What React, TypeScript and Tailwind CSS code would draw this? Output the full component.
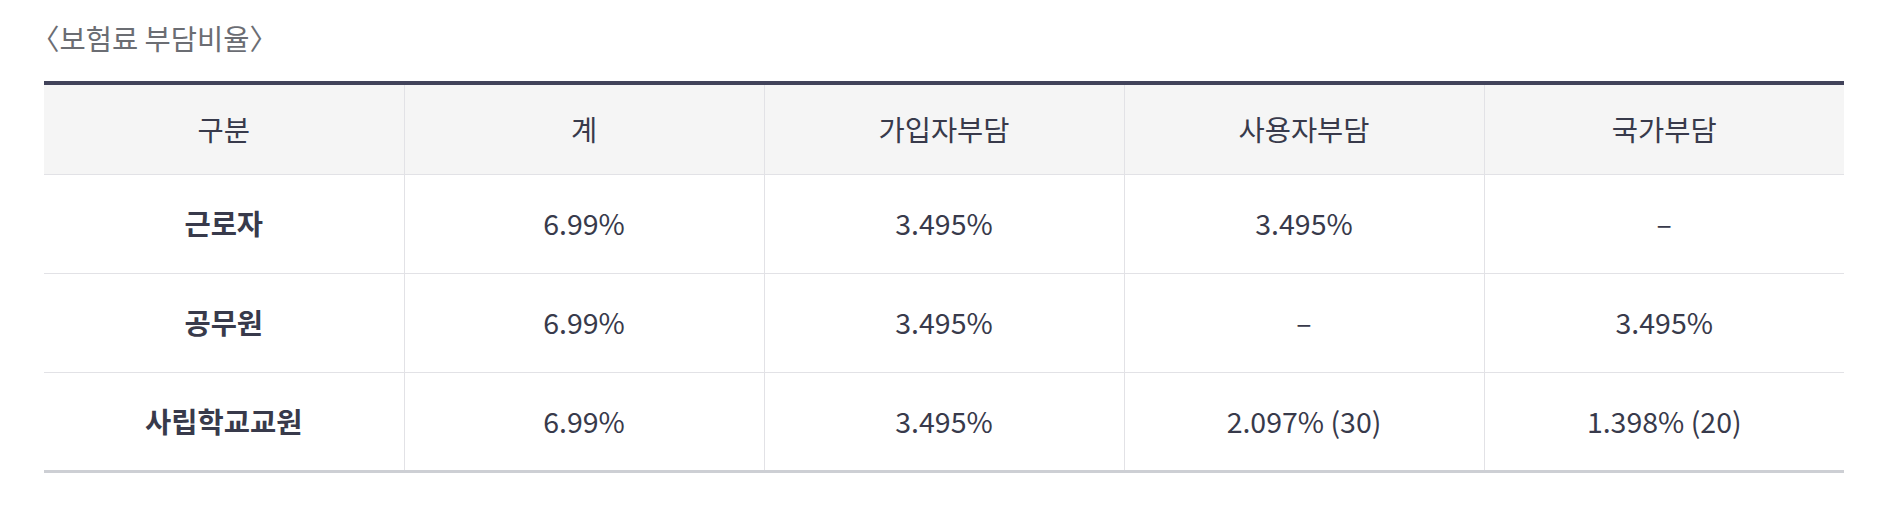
import React from "react";

const font = { fontFamily: '"Noto Sans CJK KR", "Noto Sans", sans-serif' };

const header = ["구분", "계", "가입자부담", "사용자부담", "국가부담"];
const rows: string[][] = [
  ["근로자", "6.99%", "3.495%", "3.495%", "–"],
  ["공무원", "6.99%", "3.495%", "–", "3.495%"],
  ["사립학교교원", "6.99%", "3.495%", "2.097% (30)", "1.398% (20)"],
];

export default function App() {
  return (
    <div className="w-[1888px] h-[510px] bg-white pl-[44px] pt-[17px]" style={font}>
      <h3 className="ml-[-13px] text-[28.5px] leading-[41px] text-[#6b6d73] font-normal">〈보험료 부담비율〉</h3>
      <table className="mt-[23px] w-[1800px] table-fixed border-collapse text-[#383a4b]">
        <thead>
          <tr className="border-t-4 border-t-[#41435a] bg-[#f5f5f5]">
            {header.map((h, i) => (
              <th
                key={h}
                className={`h-[91px] p-0 text-[28.5px] font-normal border-b border-b-[#e2e2e6] ${i < 4 ? "border-r border-r-[#e2e2e6]" : ""}`}
              >
                {h}
              </th>
            ))}
          </tr>
        </thead>
        <tbody>
          {rows.map((r, ri) => (
            <tr key={ri} className={ri === rows.length - 1 ? "border-b-[3px] border-b-[#cdcfd4]" : "border-b border-b-[#e2e2e6]"}>
              {r.map((c, ci) => (
                <td
                  key={ci}
                  className={`h-[99px] p-0 text-center text-[28.5px] ${ci === 0 ? "font-bold" : "font-normal"} ${ci < 4 ? "border-r border-r-[#e2e2e6]" : ""}`}
                >
                  {c}
                </td>
              ))}
            </tr>
          ))}
        </tbody>
      </table>
    </div>
  );
}
